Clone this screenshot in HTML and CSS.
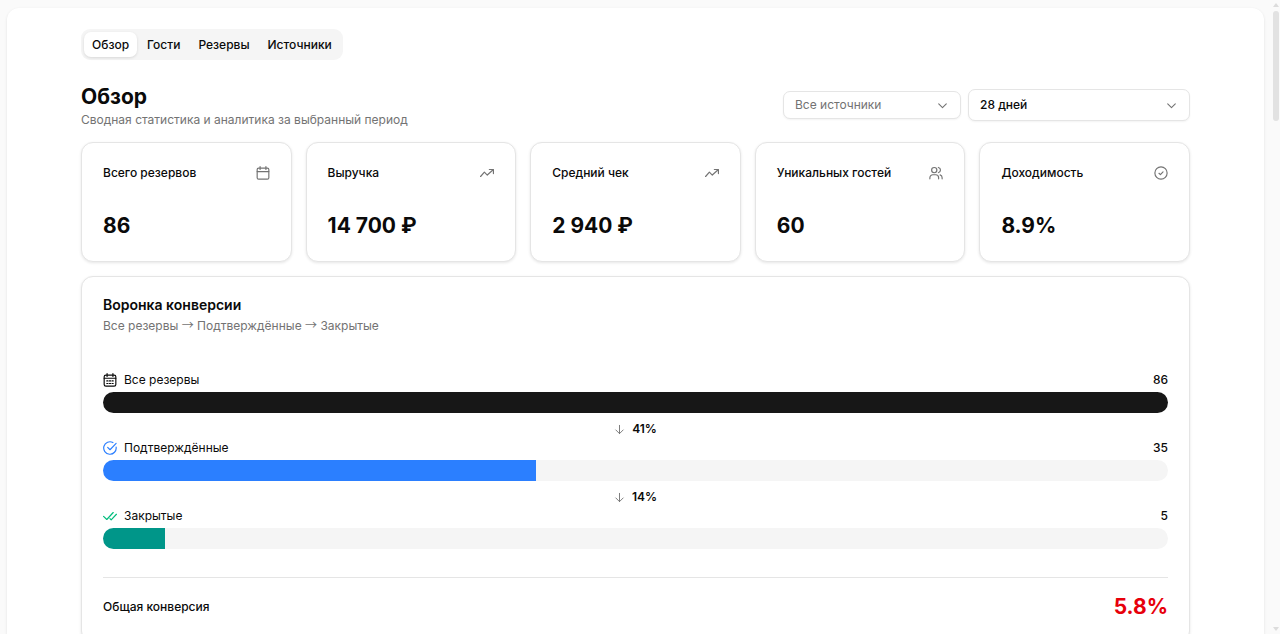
FILE: index.html
```
<!DOCTYPE html>
<html lang="ru">
<head>
    <meta charset="UTF-8">
    <meta name="viewport" content="width=device-width, initial-scale=1">
    <title>Обзор</title>
    <link rel="stylesheet" href="styles.css">
</head>
<body>
    <div class="app">
        <main class="panel">
            <nav class="tabs" role="tablist">
                <button class="tab active" type="button" role="tab" aria-selected="true">Обзор</button>
                <button class="tab" type="button" role="tab" aria-selected="false">Гости</button>
                <button class="tab" type="button" role="tab" aria-selected="false">Резервы</button>
                <button class="tab" type="button" role="tab" aria-selected="false">Источники</button>
            </nav>

            <header class="head">
                <div>
                    <h1>Обзор</h1>
                    <p class="muted">Сводная статистика и аналитика за выбранный период</p>
                </div>
                <div class="filters">
                    <div class="select source">
                        <select aria-label="Источник">
                            <option>Все источники</option>
                        </select>
                        <svg class="icon" viewBox="0 0 24 24"><path d="m5 9 7 7 7-7"/></svg>
                    </div>
                    <div class="select period">
                        <select aria-label="Период">
                            <option>28 дней</option>
                        </select>
                        <svg class="icon" viewBox="0 0 24 24"><path d="m5 9 7 7 7-7"/></svg>
                    </div>
                </div>
            </header>

            <section class="stats">
                <article class="card stat">
                    <div class="stat-head">
                        <h2>Всего резервов</h2>
                        <svg class="icon" viewBox="0 0 24 24"><path d="M7 1v5M17 1v5M2 9.500h20"/><rect x="2" y="3.500" width="20" height="19" rx="2.500"/></svg>
                    </div>
                    <p class="value">86</p>
                </article>
                <article class="card stat">
                    <div class="stat-head">
                        <h2>Выручка</h2>
                        <svg class="icon" viewBox="0 0 24 24"><path d="m1 18 6.500-7.500 5 5L22.500 6.500"/><path d="M16 6h7v7"/></svg>
                    </div>
                    <p class="value">14 700 ₽</p>
                </article>
                <article class="card stat">
                    <div class="stat-head">
                        <h2>Средний чек</h2>
                        <svg class="icon" viewBox="0 0 24 24"><path d="m1 18 6.500-7.500 5 5L22.500 6.500"/><path d="M16 6h7v7"/></svg>
                    </div>
                    <p class="value">2 940 ₽</p>
                </article>
                <article class="card stat">
                    <div class="stat-head">
                        <h2>Уникальных гостей</h2>
                        <svg class="icon" viewBox="0 0 24 24"><circle cx="9" cy="7" r="4.500"/><path d="M1.500 22v-2a5 5 0 0 1 5-5h5a5 5 0 0 1 5 5v2M16 2.500a4.600 4.600 0 0 1 0 9M19 15.200a5 5 0 0 1 3.500 4.800v2"/></svg>
                    </div>
                    <p class="value">60</p>
                </article>
                <article class="card stat">
                    <div class="stat-head">
                        <h2>Доходимость</h2>
                        <svg class="icon" viewBox="0 0 24 24"><circle cx="12" cy="12" r="10.500"/><path d="m8.500 12.500 2.500 2.300 4.500-4.600"/></svg>
                    </div>
                    <p class="value">8.9%</p>
                </article>
            </section>

            <section class="card funnel">
                <h2 class="funnel-title">Воронка конверсии</h2>
                <p class="muted funnel-desc">Все резервы <span class="arrow">→</span> Подтверждённые <span class="arrow">→</span> Закрытые</p>

                <div class="step">
                    <svg class="icon" viewBox="0 0 24 24"><path d="M7 1v5M17 1v5M2 9h20"/><rect x="2" y="3.500" width="20" height="19" rx="3"/><path d="M6.500 13.500h2M11 13.500h2M15.500 13.500h2M6.500 18h2M11 18h2M15.500 18h2"/></svg>
                    <span>Все резервы</span>
                    <span class="count">86</span>
                </div>
                <div class="bar"><div class="fill all" style="width: 100%"></div></div>
                <div class="rate">
                    <svg class="icon" viewBox="0 0 24 24"><path d="M12 3v18M4 13l8 8 8-8"/></svg>
                    <span>41%</span>
                </div>

                <div class="step">
                    <svg class="icon blue" viewBox="0 0 24 24"><path d="M22.500 10.500A10.700 10.700 0 1 1 17 2.600"/><path d="m8 11 4 4L22.500 4"/></svg>
                    <span>Подтверждённые</span>
                    <span class="count">35</span>
                </div>
                <div class="bar"><div class="fill confirmed" style="width: 40.7%"></div></div>
                <div class="rate">
                    <svg class="icon" viewBox="0 0 24 24"><path d="M12 3v18M4 13l8 8 8-8"/></svg>
                    <span>14%</span>
                </div>

                <div class="step">
                    <svg class="icon green" viewBox="0 0 24 24"><path d="M17.500 6 6.500 18 1 12.500"/><path d="m23 9-9 9.500-2-2"/></svg>
                    <span>Закрытые</span>
                    <span class="count">5</span>
                </div>
                <div class="bar"><div class="fill closed" style="width: 5.8%"></div></div>

                <div class="total">
                    <span>Общая конверсия</span>
                    <strong>5.8%</strong>
                </div>
            </section>
        </main>

        <div class="scrollbar" aria-hidden="true">
            <svg viewBox="0 0 6 4"><path d="M3 0 6 4H0z"/></svg>
            <div class="thumb"></div>
            <svg class="down" viewBox="0 0 6 4"><path d="M0 0h6L3 4z"/></svg>
        </div>
    </div>
</body>
</html>
```
FILE: styles.css
```
* {
    box-sizing: border-box;
}

body {
    margin: 0;
    background: #fafafa;
    color: #0a0a0a;
    font: 12px/18px Inter, "Liberation Sans", sans-serif;
}

h1, h2, p {
    margin: 0;
}

button, select {
    font: inherit;
    color: inherit;
}

.app {
    display: flex;
    height: 100vh;
    padding: 8px 0 0 7px;
    overflow: hidden;
}

.panel {
    flex: 1;
    min-width: 0;
    padding: 21px 74px;
    background: #fff;
    border-radius: 12px 12px 0 0;
    box-shadow: 0 1px 3px rgba(0,0,0,.1);
}

.muted {
    color: #737373;
}

.icon {
    flex: none;
    width: 14px;
    height: 14px;
    fill: none;
    stroke: currentColor;
    stroke-width: 2;
    stroke-linecap: round;
    stroke-linejoin: round;
}

/* tabs */
.tabs {
    display: flex;
    gap: 2px;
    width: fit-content;
    height: 31px;
    padding: 3px;
    background: #f5f5f5;
    border-radius: 9px;
}

.tab {
    padding: 0 8px;
    border: 0;
    border-radius: 7px;
    background: none;
    font-weight: 500;
}

.tab.active {
    background: #fff;
    box-shadow: 0 1px 3px rgba(0,0,0,.12);
}

/* title and filters */
.head {
    display: flex;
    align-items: center;
    justify-content: space-between;
    margin: 22px 0 14px;
}

.head h1 {
    font-size: 21px;
    line-height: 29px;
    font-weight: 700;
}

.filters {
    display: flex;
    align-items: center;
    gap: 7px;
}

.head .muted {
    line-height: 17px;
}

.select {
    display: grid;
    align-items: center;
}

.select select,
.select .icon {
    grid-area: 1 / 1;
}

.select select {
    width: 100%;
    height: 32px;
    padding: 0 32px 0 11px;
    appearance: none;
    background: #fff;
    border: 1px solid #e5e5e5;
    border-radius: 7px;
    box-shadow: 0 1px 2px rgba(0,0,0,.05);
    font-weight: 500;
}

.select .icon {
    justify-self: end;
    width: 13px;
    height: 13px;
    margin-right: 12px;
    color: #737373;
    pointer-events: none;
}

.source {
    width: 178px;
}

.source select {
    height: 28px;
    color: #737373;
    font-weight: 400;
}

.period {
    width: 222px;
}

/* cards */
.card {
    padding: 21px;
    background: #fff;
    border: 1px solid #e5e5e5;
    border-radius: 12px;
    box-shadow: 0 1px 3px rgba(0,0,0,.1);
}

.stats {
    display: grid;
    grid-template-columns: repeat(5, 1fr);
    gap: 14px;
    margin-bottom: 14px;
}

.stat-head {
    display: flex;
    align-items: center;
    justify-content: space-between;
    color: #737373;
}

.stat-head h2 {
    color: #0a0a0a;
    font-size: 12px;
    font-weight: 500;
}

.value {
    margin-top: 29px;
    font-size: 21px;
    line-height: 29px;
    font-weight: 700;
}

/* funnel */
.funnel-title {
    font-size: 14px;
    line-height: 14px;
    font-weight: 600;
}

.funnel-desc {
    margin: 5px 0 35px;
}

.arrow {
    font-family: "Noto Sans CJK JP", sans-serif;
    line-height: 1;
}

.step {
    display: flex;
    align-items: center;
    gap: 7px;
    height: 20px;
    margin-bottom: 2px;
}

.count {
    margin-left: auto;
    font-weight: 500;
}

.blue {
    color: #2b7fff;
}

.green {
    color: #00bc7d;
}

.bar {
    height: 21px;
    overflow: hidden;
    background: #f5f5f5;
    border-radius: 11px;
}

.fill {
    height: 100%;
}

.all {
    background: #171717;
}

.confirmed {
    background: #2b7fff;
}

.closed {
    background: #009689;
}

.rate {
    display: flex;
    align-items: center;
    justify-content: center;
    gap: 7px;
    margin-top: 7px;
    font-weight: 600;
}

.rate .icon {
    width: 11px;
    height: 11px;
    color: #737373;
}

.total {
    display: flex;
    align-items: center;
    justify-content: space-between;
    margin-top: 28px;
    padding-top: 14px;
    border-top: 1px solid #e5e5e5;
    font-weight: 500;
}

.total strong {
    color: #e7000b;
    font-size: 21px;
    line-height: 29px;
    font-weight: 700;
}

/* scrollbar */
.scrollbar {
    display: flex;
    flex-direction: column;
    align-items: center;
    width: 9px;
    margin: -5px 0 3px 7px;
}

.scrollbar svg {
    width: 6px;
    height: 4px;
    fill: #dcdcdc;
}

.thumb {
    width: 6px;
    height: 110px;
    margin-top: 4px;
    background: #e2e2e2;
    border-radius: 3px;
}

.scrollbar .down {
    margin-top: auto;
}
```
